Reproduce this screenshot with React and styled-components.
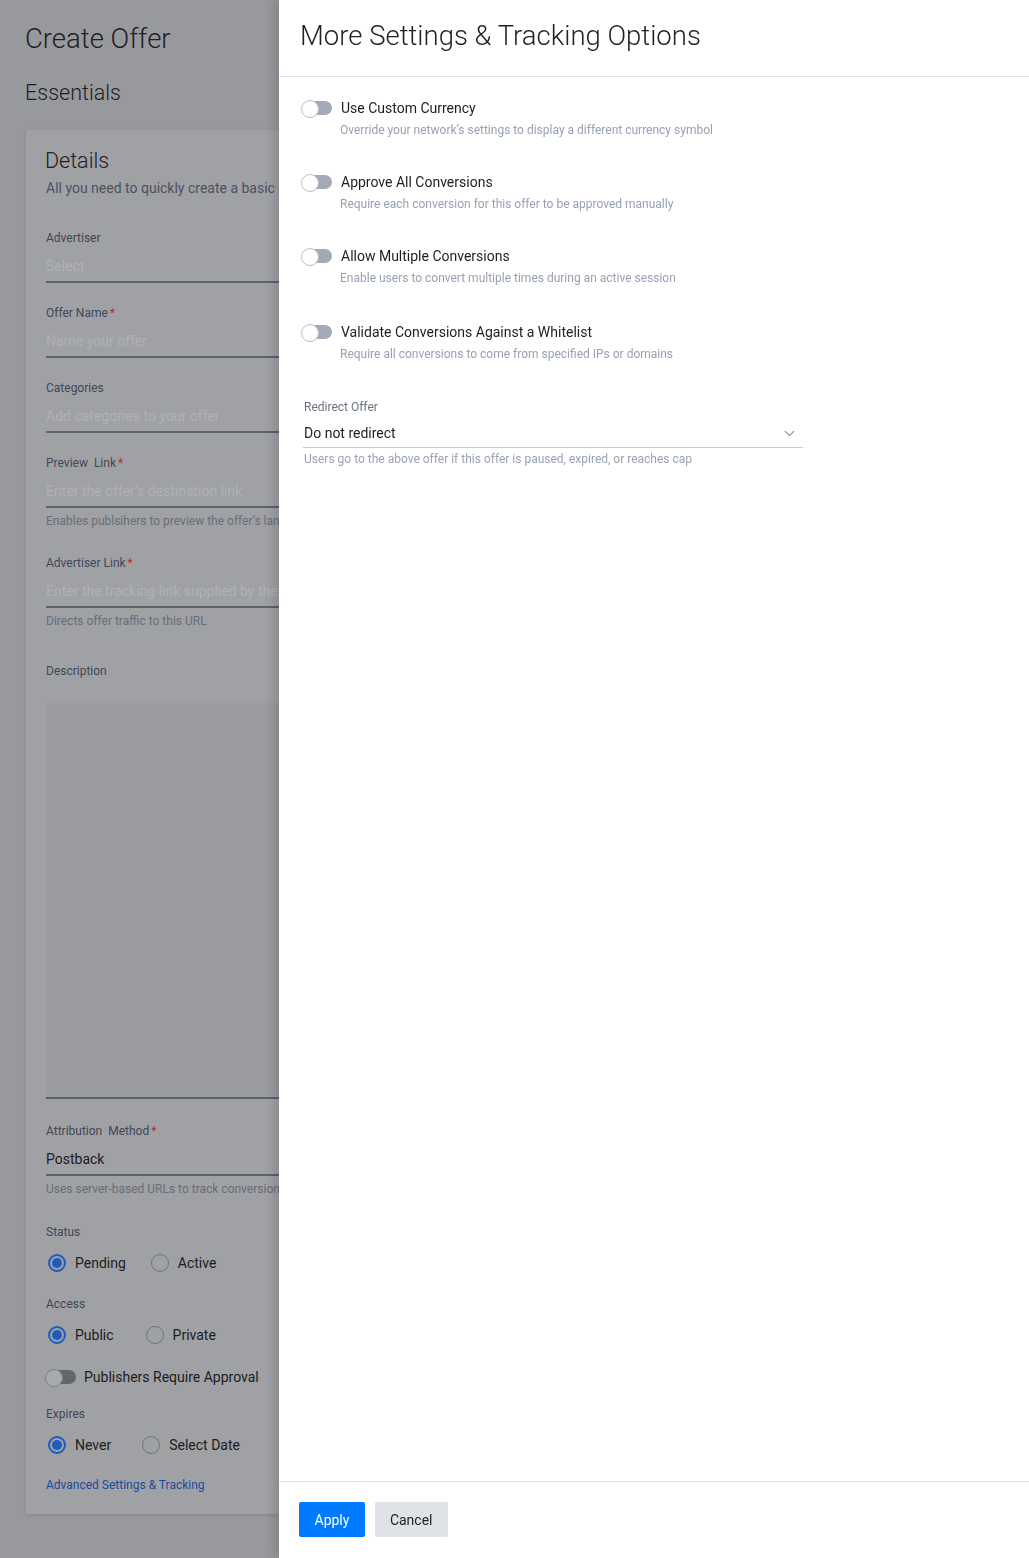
import React from 'react';
import styled, { createGlobalStyle } from 'styled-components';
import { ChevronDown } from 'lucide-react';

const GlobalStyle = createGlobalStyle`
  html, body { margin: 0; padding: 0; }
  body {
    font-family: Roboto, "Liberation Sans", Arial, sans-serif;
    background: #98999d;
    overflow: hidden;
  }
  * { box-sizing: border-box; }
`;

/* ---------- dimmed page behind the drawer ---------- */
const Page = styled.div`
  width: 1029px;
  height: 1558px;
  padding: 21px 0 0 25px;
  background: #98999d;
  overflow: hidden;
  display: flex;
  flex-direction: column;
`;

const PageTitle = styled.h1`
  margin: 0;
  font-size: 27.5px;
  line-height: 36px;
  font-weight: 300;
  color: #1f2023;
`;

const SectionTitle = styled.h2`
  margin: 22px 0 0;
  font-size: 21.5px;
  line-height: 28px;
  font-weight: 300;
  color: #1f2023;
`;

const Card = styled.section`
  margin: 23px 26px 0 1px;
  padding: 18px 20px 21px;
  background: #a0a1a5;
  box-shadow: 0 1px 4px rgba(0, 0, 0, 0.12);
  display: flex;
  flex-direction: column;
`;

const CardTitle = styled.h3`
  margin: 0 0 0 -1px;
  font-size: 21.5px;
  line-height: 26px;
  font-weight: 300;
  color: #1f2023;
`;

const CardSubtitle = styled.p`
  margin: 4px 0 0;
  font-size: 14px;
  line-height: 20px;
  color: #4b5163;
  white-space: nowrap;
`;

const Field = styled.div`
  display: flex;
  flex-direction: column;
  margin-top: ${(p) => p.$mt ?? 22}px;
`;

const FieldLabel = styled.div`
  font-size: 12px;
  line-height: 16px;
  color: #414756;
  white-space: pre;
`;

const Req = styled.span`
  color: #a8333b;
  margin-left: 2px;
`;

const Control = styled.div`
  height: 37px;
  padding: 10px 0 5px;
  font-size: 14px;
  line-height: 20px;
  color: ${(p) => (p.$filled ? '#1c1d20' : '#afb1b6')};
  border-bottom: 2px solid #5c616c;
  white-space: nowrap;
  overflow: hidden;
`;

const FieldHelp = styled.div`
  margin-top: 5px;
  font-size: 12px;
  line-height: 16px;
  color: #686d78;
  white-space: nowrap;
`;

const TextArea = styled.div`
  margin-top: 22px;
  height: 398px;
  background: #9b9ca0;
  border-bottom: 2px solid #5c616c;
`;

const RadioRow = styled.div`
  display: flex;
  align-items: center;
  height: 22px;
  margin-top: 12px;
  gap: ${(p) => p.$gap}px;
`;

const RadioOption = styled.label`
  display: flex;
  align-items: center;
  gap: 9px;
  font-size: 14px;
  color: #1c1d20;
  margin-left: 2px;
`;

const RadioDot = styled.span`
  width: 18px;
  height: 18px;
  border-radius: 50%;
  border: ${(p) => (p.$checked ? '2px solid #1c5cbd' : '1.5px solid #6e727a')};
  display: flex;
  align-items: center;
  justify-content: center;
  &::after {
    content: '';
    width: 10px;
    height: 10px;
    border-radius: 50%;
    background: ${(p) => (p.$checked ? '#1c5cbd' : 'transparent')};
  }
`;

const SwitchRow = styled.div`
  display: flex;
  align-items: center;
  gap: 8px;
  height: 22px;
  margin: ${(p) => p.$mt ?? 0}px 0 0 -1px;
  font-size: 14px;
  color: #1c1d20;
`;

const Switch = styled.span`
  position: relative;
  flex: none;
  width: 31px;
  height: 16px;
  &::before {
    content: '';
    position: absolute;
    left: 2px;
    right: 0;
    top: 1px;
    height: 14px;
    border-radius: 7px;
    background: ${(p) => p.$track};
  }
  &::after {
    content: '';
    position: absolute;
    left: 0;
    top: 0;
    width: 16px;
    height: 16px;
    border-radius: 50%;
    background: ${(p) => p.$knob};
    border: 1px solid ${(p) => p.$edge};
  }
`;

const Link = styled.a`
  margin-top: 21px;
  font-size: 12px;
  line-height: 16px;
  color: #1a4c9c;
  text-decoration: none;
`;

/* ---------- drawer ---------- */
const Drawer = styled.aside`
  position: fixed;
  top: 0;
  right: 0;
  width: 750px;
  height: 1558px;
  background: #ffffff;
  box-shadow: -5px 0 10px rgba(0, 0, 0, 0.14);
  display: flex;
  flex-direction: column;
`;

const DrawerHeader = styled.header`
  height: 77px;
  padding: 18px 21px 0;
  border-bottom: 1px solid #e2e4e8;
`;

const DrawerTitle = styled.h2`
  margin: 0;
  font-size: 27.5px;
  line-height: 36px;
  font-weight: 300;
  color: #1f2124;
`;

const DrawerBody = styled.div`
  flex: 1;
  padding: 21px 22px 0;
  display: flex;
  flex-direction: column;
`;

const Option = styled.div`
  display: flex;
  flex-direction: column;
  margin-top: ${(p) => p.$mt ?? 0}px;
`;

const OptionHead = styled.div`
  display: flex;
  align-items: center;
  gap: 9px;
  height: 20px;
`;

const OptionTitle = styled.span`
  font-size: 14px;
  line-height: 20px;
  color: #1b1e22;
`;

const OptionDesc = styled.div`
  margin: 4px 0 0 39px;
  font-size: 12px;
  line-height: 16px;
  color: #98a1b2;
`;

const SelectBlock = styled.div`
  margin: 37px 0 0 2px;
  width: 500px;
  display: flex;
  flex-direction: column;
`;

const SelectLabel = styled.div`
  padding-left: 1px;
  font-size: 12px;
  line-height: 16px;
  color: #6c7380;
`;

const SelectBox = styled.div`
  display: flex;
  align-items: center;
  justify-content: space-between;
  padding: 8px 5px 4px 1px;
  border-bottom: 1px solid #c9ced6;
  font-size: 14px;
  line-height: 20px;
  color: #1b1e22;
  svg { color: #8d95a1; }
`;

const SelectHelp = styled.div`
  margin-top: 3px;
  padding-left: 1px;
  font-size: 12px;
  line-height: 16px;
  color: #9aa2b1;
`;

const DrawerFooter = styled.footer`
  height: 77px;
  padding: 20px 20px 0;
  border-top: 1px solid #e2e4e8;
  display: flex;
  gap: 10px;
`;

const Button = styled.button`
  height: 35px;
  padding: 0 ${(p) => (p.$primary ? 15.5 : 15)}px;
  border: none;
  border-radius: 2px;
  font-family: inherit;
  font-size: 14px;
  background: ${(p) => (p.$primary ? '#007bff' : '#dfe2e6')};
  color: ${(p) => (p.$primary ? '#ffffff' : '#212529')};
  cursor: pointer;
`;

const options = [
  ['Use Custom Currency', "Override your network\u2019s settings to display a different currency symbol"],
  ['Approve All Conversions', 'Require each conversion for this offer to be approved manually'],
  ['Allow Multiple Conversions', 'Enable users to convert multiple times during an active session'],
  ['Validate Conversions Against a Whitelist', 'Require all conversions to come from specified IPs or domains'],
];

export default function App() {
  return (
    <>
      <GlobalStyle />
      <Page>
        <PageTitle>Create Offer</PageTitle>
        <SectionTitle>Essentials</SectionTitle>
        <Card>
          <CardTitle>Details</CardTitle>
          <CardSubtitle>All you need to quickly create a basic offer</CardSubtitle>

          <Field $mt={32}>
            <FieldLabel>Advertiser</FieldLabel>
            <Control>Select</Control>
          </Field>
          <Field>
            <FieldLabel>Offer Name<Req>*</Req></FieldLabel>
            <Control>Name your offer</Control>
          </Field>
          <Field>
            <FieldLabel>Categories</FieldLabel>
            <Control>Add categories to your offer</Control>
          </Field>
          <Field>
            <FieldLabel>Preview  Link<Req>*</Req></FieldLabel>
            <Control>Enter the offer&rsquo;s destination link</Control>
            <FieldHelp>Enables publsihers to preview the offer&rsquo;s landing page</FieldHelp>
          </Field>
          <Field $mt={26}>
            <FieldLabel>Advertiser Link<Req>*</Req></FieldLabel>
            <Control>Enter the tracking link supplied by the advertiser</Control>
            <FieldHelp>Directs offer traffic to this URL</FieldHelp>
          </Field>
          <Field $mt={34}>
            <FieldLabel>Description</FieldLabel>
            <TextArea />
          </Field>
          <Field $mt={24}>
            <FieldLabel>Attribution  Method<Req>*</Req></FieldLabel>
            <Control $filled>Postback</Control>
            <FieldHelp>Uses server-based URLs to track conversions</FieldHelp>
          </Field>

          <Field $mt={27}>
            <FieldLabel>Status</FieldLabel>
            <RadioRow $gap={23}>
              <RadioOption><RadioDot $checked />Pending</RadioOption>
              <RadioOption><RadioDot />Active</RadioOption>
            </RadioRow>
          </Field>
          <Field>
            <FieldLabel>Access</FieldLabel>
            <RadioRow $gap={30}>
              <RadioOption><RadioDot $checked />Public</RadioOption>
              <RadioOption><RadioDot />Private</RadioOption>
            </RadioRow>
          </Field>
          <SwitchRow $mt={20}>
            <Switch $track="#62666e" $knob="#a9aaae" $edge="#7c8088" />
            Publishers Require Approval
          </SwitchRow>
          <Field $mt={18}>
            <FieldLabel>Expires</FieldLabel>
            <RadioRow $gap={29}>
              <RadioOption><RadioDot $checked />Never</RadioOption>
              <RadioOption><RadioDot />Select Date</RadioOption>
            </RadioRow>
          </Field>
          <Link href="#">Advanced Settings &amp; Tracking</Link>
        </Card>
      </Page>

      <Drawer>
        <DrawerHeader>
          <DrawerTitle>More Settings &amp; Tracking Options</DrawerTitle>
        </DrawerHeader>
        <DrawerBody>
          {options.map(([title, desc], i) => (
            <Option key={title} $mt={i === 0 ? 0 : i === 3 ? 36 : 34}>
              <OptionHead>
                <Switch $track="#a3aab7" $knob="#ffffff" $edge="#b9bfc9" />
                <OptionTitle>{title}</OptionTitle>
              </OptionHead>
              <OptionDesc>{desc}</OptionDesc>
            </Option>
          ))}
          <SelectBlock>
            <SelectLabel>Redirect Offer</SelectLabel>
            <SelectBox>
              Do not redirect
              <ChevronDown size={17} strokeWidth={1.8} />
            </SelectBox>
            <SelectHelp>Users go to the above offer if this offer is paused, expired, or reaches cap</SelectHelp>
          </SelectBlock>
        </DrawerBody>
        <DrawerFooter>
          <Button $primary>Apply</Button>
          <Button>Cancel</Button>
        </DrawerFooter>
      </Drawer>
    </>
  );
}
